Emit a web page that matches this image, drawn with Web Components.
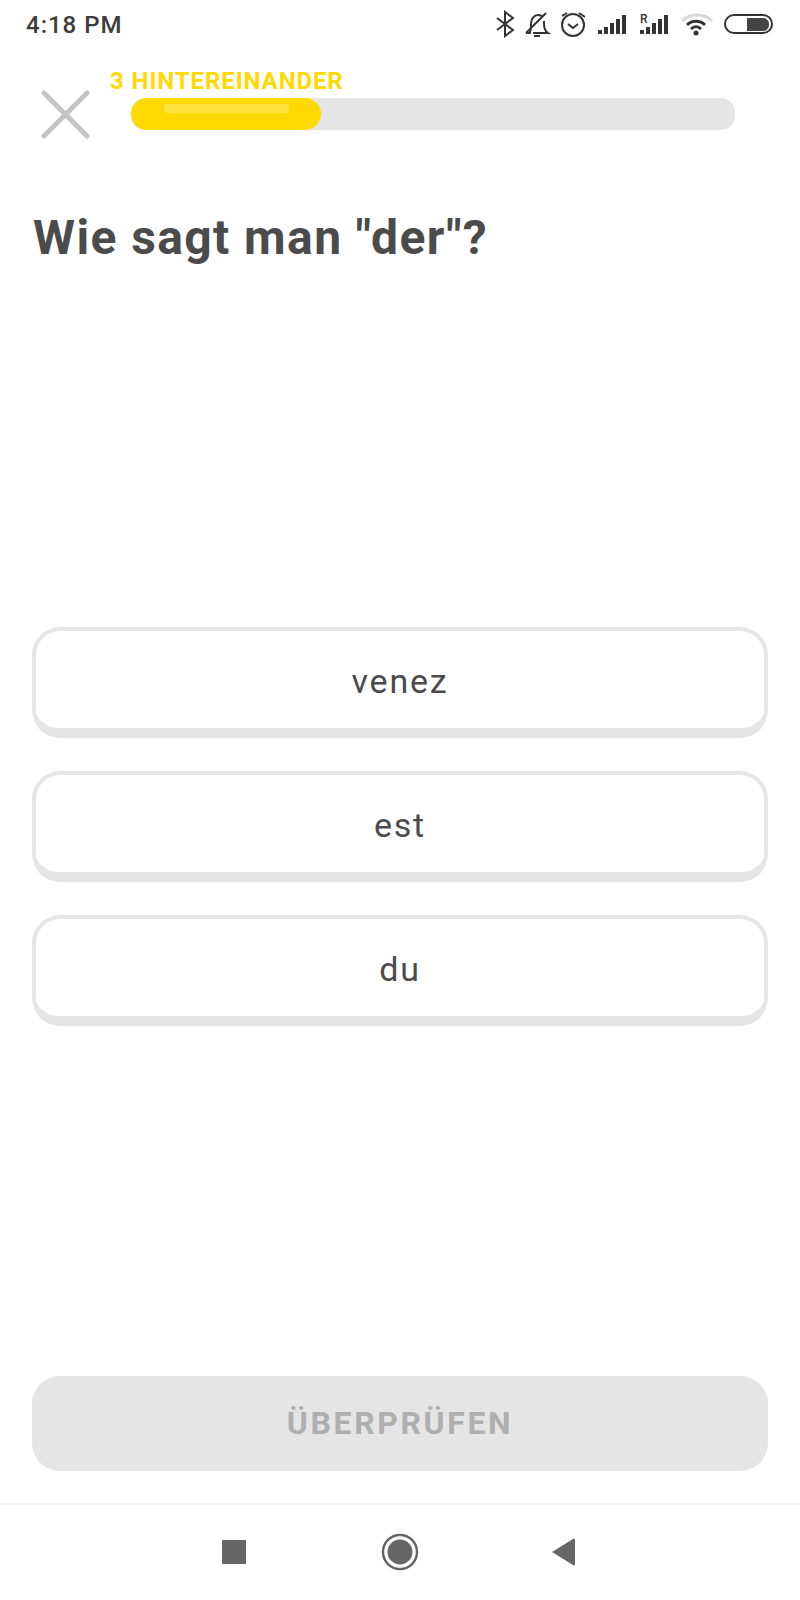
<!DOCTYPE html>
<html>
<head>
<meta charset="utf-8">
<title>Wie sagt man</title>
<style>
  html, body {
    background: #ffffff;
    height: 1600px;
    margin: 0;
    padding: 0;
  }
</style>
</head>
<body>
<quiz-app>
  <status-bar></status-bar>
  <quiz-header label="3 HINTEREINANDER"></quiz-header>
  <quiz-title>Wie sagt man "der"?</quiz-title>
  <choice-list>
    <choice-button>venez</choice-button>
    <choice-button>est</choice-button>
    <choice-button>du</choice-button>
  </choice-list>
  <check-button>ÜBERPRÜFEN</check-button>
  <nav-bar></nav-bar>
</quiz-app>

<script>
class QuizApp extends HTMLElement {
  constructor() {
    super();
    this.attachShadow( {mode: 'open'} );
    this.shadowRoot.innerHTML = `
      <style>
        :host {
          box-sizing: border-box;
          display: flex;
          flex-direction: column;
          font-family: Roboto, "Liberation Sans", sans-serif;
          height: 1600px;
          width: 800px;
        }
      </style>
      <slot></slot>
    `;
  }
}

class StatusBar extends HTMLElement {
  constructor() {
    super();
    this.attachShadow( {mode: 'open'} );
    this.shadowRoot.innerHTML = `
      <style>
        :host {
          align-items: center;
          box-sizing: border-box;
          color: #3c3c3c;
          display: flex;
          height: 50px;
          padding: 0 26px;
        }

        span {
          flex-grow: 1;
          font-size: 24px;
          font-weight: 500;
          letter-spacing: 1px;
        }

        svg {
          display: block;
        }
      </style>
      <span>4:18 PM</span>
      <svg width="282" height="38" viewBox="0 0 282 38" fill="none" stroke="#333" stroke-width="2">
        <!-- bluetooth -->
        <path d="M5 12 L21 24 L13 30 L13 6 L21 12 L5 24" />
        <!-- muted bell -->
        <path d="M34 27 L38 27 C39 24 39 21 39 18 C39 13 42 9 46 9 C48 9 50 10 51 11 M41 27 L56 27 C53 25 52 22 52 18 L52 15 M42 30 L48 30 M34 27 L54 7" />
        <!-- alarm -->
        <circle cx="81" cy="19" r="11" />
        <path d="M76 18 L81 22 L86 18 M70 10 L75 7 M87 7 L93 11" />
        <!-- signal -->
        <g fill="#333" stroke="none">
          <rect x="106" y="24" width="4" height="4" />
          <rect x="112" y="21" width="4" height="7" />
          <rect x="118" y="17" width="4" height="11" />
          <rect x="124" y="13" width="4" height="15" />
          <rect x="130" y="9" width="4" height="19" />
          <rect x="148" y="24" width="4" height="4" />
          <rect x="154" y="21" width="4" height="7" />
          <rect x="160" y="17" width="4" height="11" />
          <rect x="166" y="13" width="4" height="15" />
          <rect x="172" y="9" width="4" height="19" />
        </g>
        <text x="148" y="17" font-family="Roboto, sans-serif" font-size="12" font-weight="500" fill="#333" stroke="none">R</text>
        <!-- wifi -->
        <path d="M190 15 C198 7 212 7 220 15" stroke="#d8d8d8" stroke-width="3" />
        <path d="M195 19 C200 14 208 14 213 19 M199 23 C202 20 206 20 209 23" stroke-width="3" />
        <circle cx="204" cy="27" r="2.5" fill="#333" stroke="none" />
        <!-- battery -->
        <rect x="233" y="9" width="47" height="18" rx="9" />
        <path d="M255 12 L271 12 C275 12 277 15 277 18.5 C277 22 275 25 271 25 L255 25 Z" fill="#444" stroke="none" />
      </svg>
    `;
  }
}

class QuizHeader extends HTMLElement {
  constructor() {
    super();
    this.attachShadow( {mode: 'open'} );
    this.shadowRoot.innerHTML = `
      <style>
        :host {
          box-sizing: border-box;
          display: flex;
          flex-direction: row;
          height: 100px;
          padding: 17px 0 0 41px;
        }

        svg {
          display: block;
          margin: 23px 41px 0 0;
        }

        div.column {
          display: flex;
          flex-direction: column;
        }

        p {
          color: #ffd900;
          font-size: 24px;
          font-weight: 700;
          letter-spacing: 0.9px;
          line-height: 28px;
          margin: 0 0 3px -21px;
        }

        #track {
          background: #e5e5e5;
          border-radius: 14px;
          height: 32px;
          overflow: hidden;
          width: 604px;
        }

        #fill {
          background: #ffd900;
          border-radius: 16px;
          box-sizing: border-box;
          height: 32px;
          padding: 6px 32px 0 33px;
          width: 190px;
        }

        #fill div {
          background: #ffe33f;
          border-radius: 3px;
          height: 9px;
        }
      </style>
      <svg width="49" height="49" viewBox="0 0 49 49" fill="none" stroke="#c4c4c4" stroke-width="5" stroke-linecap="round">
        <path d="M3 3 L46 46 M46 3 L3 46" />
      </svg>
      <div class="column">
        <p></p>
        <div id="track"><div id="fill"><div></div></div></div>
      </div>
    `;
    this.$label = this.shadowRoot.querySelector( 'p' );
  }

  connectedCallback() {
    this.$label.innerText = this.getAttribute( 'label' );
  }
}

class QuizTitle extends HTMLElement {
  constructor() {
    super();
    this.attachShadow( {mode: 'open'} );
    this.shadowRoot.innerHTML = `
      <style>
        :host {
          box-sizing: border-box;
          color: #4b4b4b;
          display: block;
          font-size: 48px;
          font-weight: 700;
          height: 477px;
          letter-spacing: 1.4px;
          line-height: 54px;
          padding: 61px 0 0 33px;
        }
      </style>
      <slot></slot>
    `;
  }
}

class ChoiceList extends HTMLElement {
  constructor() {
    super();
    this.attachShadow( {mode: 'open'} );
    this.shadowRoot.innerHTML = `
      <style>
        :host {
          box-sizing: border-box;
          display: flex;
          flex-direction: column;
          flex-grow: 1;
          gap: 33px;
          padding: 0 32px;
        }
      </style>
      <slot></slot>
    `;
  }
}

class ChoiceButton extends HTMLElement {
  constructor() {
    super();
    this.attachShadow( {mode: 'open'} );
    this.shadowRoot.innerHTML = `
      <style>
        :host {
          align-items: center;
          background: #ffffff;
          border: solid 4px #e5e5e5;
          border-bottom-width: 10px;
          border-radius: 28px;
          box-sizing: border-box;
          color: #4b4b4b;
          display: flex;
          font-size: 34px;
          height: 111px;
          justify-content: center;
          letter-spacing: 1.8px;
          padding-top: 2px;
        }
      </style>
      <slot></slot>
    `;
  }
}

class CheckButton extends HTMLElement {
  constructor() {
    super();
    this.attachShadow( {mode: 'open'} );
    this.shadowRoot.innerHTML = `
      <style>
        :host {
          align-items: center;
          background: #e5e5e5;
          border-radius: 28px;
          box-sizing: border-box;
          color: #afafaf;
          display: flex;
          font-size: 32px;
          font-weight: 700;
          height: 95px;
          justify-content: center;
          letter-spacing: 2.6px;
          margin: 0 32px 32px 32px;
          padding-bottom: 2px;
        }
      </style>
      <slot></slot>
    `;
  }
}

class NavBar extends HTMLElement {
  constructor() {
    super();
    this.attachShadow( {mode: 'open'} );
    this.shadowRoot.innerHTML = `
      <style>
        :host {
          border-top: solid 2px #f1f1f1;
          box-sizing: border-box;
          display: block;
          height: 97px;
        }

        svg {
          display: block;
        }
      </style>
      <svg width="800" height="95" viewBox="0 0 800 95" fill="#666666">
        <rect x="222" y="35" width="24" height="24" rx="1" />
        <circle cx="400" cy="47" r="17" fill="none" stroke="#666666" stroke-width="2.5" />
        <circle cx="400" cy="47" r="12.5" />
        <path d="M552 47 L573 34 Q575 33 575 35 L575 59 Q575 61 573 60 Z" />
      </svg>
    `;
  }
}

window.customElements.define( 'quiz-app', QuizApp );
window.customElements.define( 'status-bar', StatusBar );
window.customElements.define( 'quiz-header', QuizHeader );
window.customElements.define( 'quiz-title', QuizTitle );
window.customElements.define( 'choice-list', ChoiceList );
window.customElements.define( 'choice-button', ChoiceButton );
window.customElements.define( 'check-button', CheckButton );
window.customElements.define( 'nav-bar', NavBar );
</script>
</body>
</html>
